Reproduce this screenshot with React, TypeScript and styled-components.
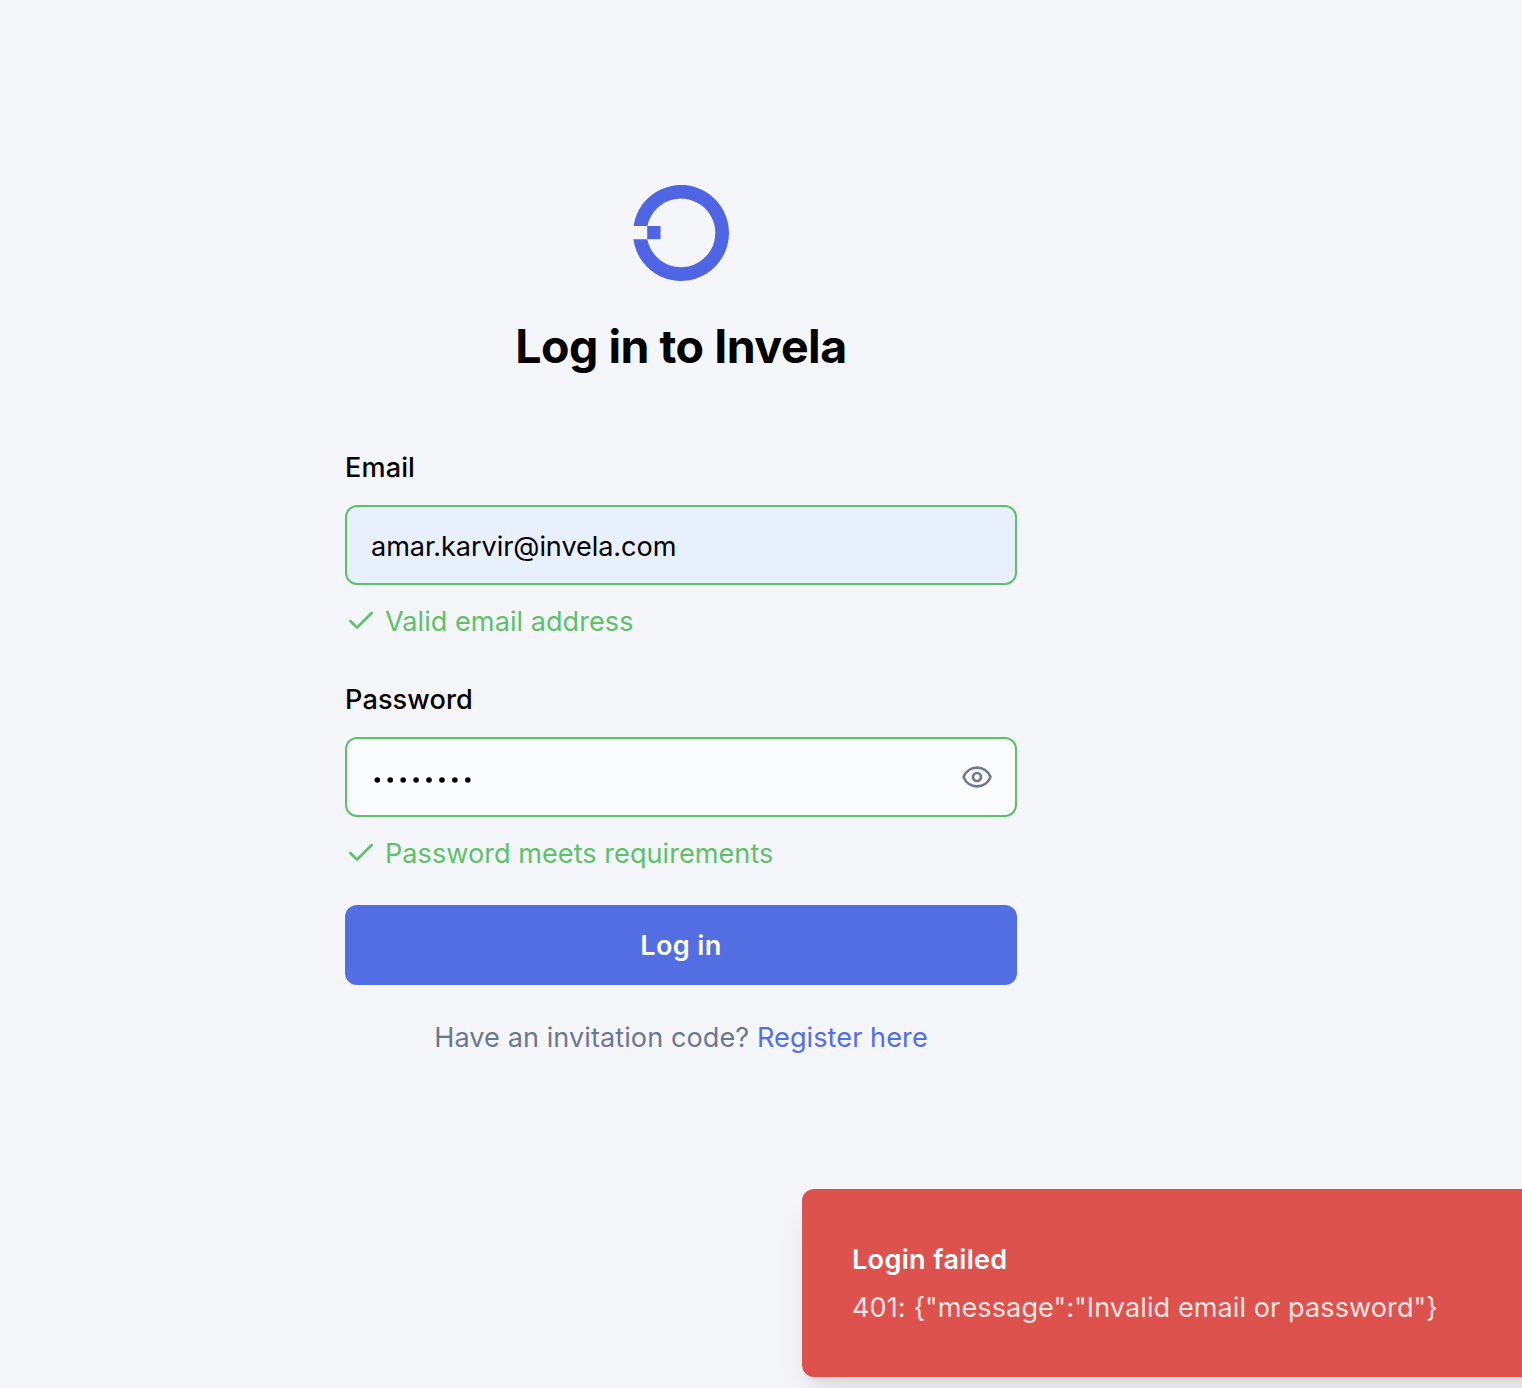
import React from "react";
import styled, { createGlobalStyle } from "styled-components";
import { Check, Eye } from "lucide-react";

const Global = createGlobalStyle`
  * { box-sizing: border-box; }
  body {
    margin: 0;
    background: #f5f6fa;
    overflow: hidden;
    font-family: Inter, "Liberation Sans", sans-serif;
    color: #000;
  }
`;

const Viewport = styled.div`
  position: relative;
  width: 1522px;
  height: 1388px;
  overflow: hidden;
`;

const Page = styled.main`
  width: 1362px;
  height: 1388px;
  padding-top: 185px;
  display: flex;
  flex-direction: column;
  align-items: center;
`;

const Logo = styled.svg`
  width: 96px;
  height: 96px;
  display: block;
  fill: #4f65e4;
`;

const Title = styled.h1`
  margin: 33px 0 0;
  line-height: 64px;
  font-size: 46.5px;
  font-weight: 700;
  white-space: nowrap;
  letter-spacing: -0.5px;
`;

const Form = styled.form`
  width: 672px;
  display: flex;
  flex-direction: column;
  margin-top: 65px;
`;

const Group = styled.div`
  display: flex;
  flex-direction: column;
  margin-bottom: 34px;
`;

const Label = styled.label`
  height: 48px;
  line-height: 49px;
  font-size: 27.1px;
  font-weight: 500;
  letter-spacing: 0.12px;
`;

const Field = styled.div<{ $filled?: boolean }>`
  margin-top: 14px;
  height: 80px;
  border: 2px solid #5cc168;
  border-radius: 12px;
  background: ${(p) => (p.$filled ? "#e8effd" : "#fbfcff")};
  display: flex;
  align-items: center;
  justify-content: space-between;
  padding: 0 22px 0 24px;
`;

const Value = styled.span`
  padding-top: 2px;
  font-size: 27.1px;
  line-height: 41px;
  letter-spacing: -0.08px;
`;

const Dots = styled.svg`
  width: 104px;
  height: 8px;
  margin-top: 6px;
`;

const Hint = styled.div`
  display: flex;
  align-items: center;
  gap: 8px;
  height: 40px;
  margin-top: 16px;
  color: #5cc168;
  font-size: 27.1px;
  line-height: 41px;
  letter-spacing: 0.03px;
`;

const Button = styled.button`
  border: 0;
  height: 80px;
  border-radius: 12px;
  background: #536de3;
  color: #fff;
  font: 600 27.1px/41px Inter, "Liberation Sans", sans-serif;
  letter-spacing: 0.4px;
  margin-top: -2px;
`;

const Foot = styled.p`
  height: 40px;
  margin: 32px 0 0;
  text-align: center;
  font-size: 27.1px;
  line-height: 41px;
  letter-spacing: 0.07px;
  color: #6b7890;
`;

const Link = styled.a`
  color: #536de3;
`;

const Toast = styled.aside`
  position: absolute;
  left: 802px;
  top: 1189px;
  width: 760px;
  height: 188px;
  background: #dd524d;
  border-radius: 12px;
  padding: 50px;
  display: flex;
  flex-direction: column;
  gap: 7px;
  color: #fff;
  font-size: 27.1px;
  line-height: 41px;
  white-space: nowrap;
  box-shadow: 0 20px 30px -6px rgba(0, 0, 0, 0.1), 0 8px 12px -8px rgba(0, 0, 0, 0.1);
`;

const ToastTitle = styled.strong`
  font-weight: 600;
  letter-spacing: 0.3px;
`;

const ToastText = styled.span`
  color: #fae4e3;
  letter-spacing: 0.07px;
`;

export default function App() {
  return (
    <Viewport>
      <Global />
      <Page>
        <Logo viewBox="0 0 96 96">
          <path d="M0.5 41A48 48 0 1 1 0.4 54.2H14.3A34.3 34.3 0 1 0 14.4 41Z" />
          <rect x="14.2" y="41" width="13.3" height="13.2" />
        </Logo>
        <Title>Log in to Invela</Title>
        <Form>
          <Group>
            <Label>Email</Label>
            <Field $filled>
              <Value>amar.karvir@invela.com</Value>
            </Field>
            <Hint>
              <Check size={32} strokeWidth={2} />
              Valid email address
            </Hint>
          </Group>
          <Group>
            <Label>Password</Label>
            <Field>
              <Dots viewBox="0 0 104 8">
                {Array.from({ length: 8 }, (_, i) => (
                  <circle key={i} cx={6.3 + i * 12.93} cy="4" r="2.8" />
                ))}
              </Dots>
              <Eye size={32} color="#6b7890" />
            </Field>
            <Hint>
              <Check size={32} strokeWidth={2} />
              Password meets requirements
            </Hint>
          </Group>
          <Button type="button">Log in</Button>
          <Foot>
            Have an invitation code? <Link>Register here</Link>
          </Foot>
        </Form>
      </Page>
      <Toast>
        <ToastTitle>Login failed</ToastTitle>
        <ToastText>{'401: {"message":"Invalid email or password"}'}</ToastText>
      </Toast>
    </Viewport>
  );
}
